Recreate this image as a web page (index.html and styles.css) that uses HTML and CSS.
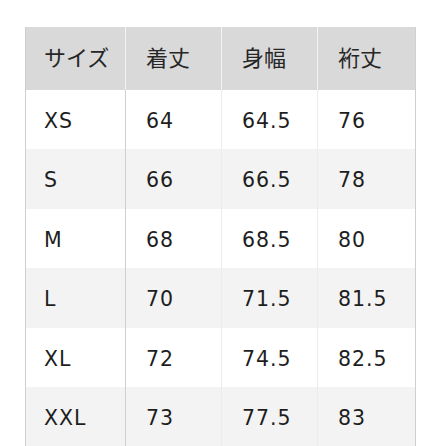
FILE: index.html
```html
<!DOCTYPE html>
<html lang="ja">
<head>
<meta charset="utf-8">
<link rel="stylesheet" href="styles.css">
</head>
<body>
<table class="size-table">
  <colgroup>
    <col class="c1"><col class="c2"><col class="c3"><col class="c4">
  </colgroup>
  <thead>
    <tr class="head"><th>サイズ</th><th>着丈</th><th>身幅</th><th>裄丈</th></tr>
  </thead>
  <tbody>
    <tr><td>XS</td><td>64</td><td>64.5</td><td>76</td></tr>
    <tr class="alt"><td>S</td><td>66</td><td>66.5</td><td>78</td></tr>
    <tr><td>M</td><td>68</td><td>68.5</td><td>80</td></tr>
    <tr class="alt"><td>L</td><td>70</td><td>71.5</td><td>81.5</td></tr>
    <tr><td>XL</td><td>72</td><td>74.5</td><td>82.5</td></tr>
    <tr class="alt"><td>XXL</td><td>73</td><td>77.5</td><td>83</td></tr>
  </tbody>
</table>
</body>
</html>
```
FILE: styles.css
```css
html, body {
  margin: 0;
  padding: 0;
  background: #fff;
}
body {
  padding: 27px 0 0 25px;
  font-family: "DejaVu Sans", "Noto Sans CJK JP", sans-serif;
  color: #1e1e1e;
}
.size-table {
  border-collapse: collapse;
  table-layout: fixed;
  width: 390px;
  border-left: 1px solid #cfcfcf;
  border-right: 1px solid #cfcfcf;
}
.c1 { width: 100px; }
.c2 { width: 96px; }
.c3 { width: 96px; }
.c4 { width: 98px; }
th, td {
  padding: 0 0 0 20px;
  text-align: left;
  font-weight: normal;
  line-height: 1;
  box-sizing: border-box;
}
th:first-child, td:first-child { padding-left: 18px; }
th {
  height: 63px;
  padding-bottom: 5px;
  background: #d9d9d9;
  font-family: "Noto Sans CJK JP", sans-serif;
  font-size: 22px;
  color: #262626;
  border-left: 1px solid #f4f4f4;
}
th:first-child { border-left: none; }
td {
  height: 59.4px;
  padding-top: 3px;
  font-size: 20.5px;
  letter-spacing: 1px;
  border-left: 1px solid #ececec;
}
td:first-child { border-left: none; }
td:nth-child(2) { border-left: 1px solid #cfcfcf; }
.alt td { background: #f3f3f3; }
```
